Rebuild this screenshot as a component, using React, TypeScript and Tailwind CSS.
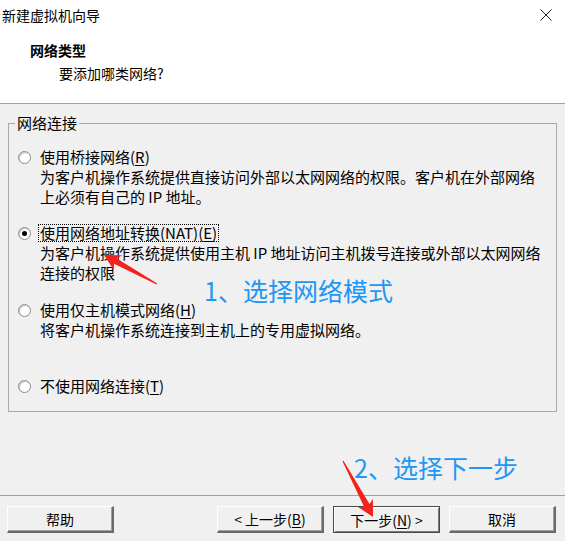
import React from "react";

const font = "font-['Noto_Sans_CJK_SC','Microsoft_YaHei',sans-serif]";

function Radio({ checked }: { checked?: boolean }) {
  return (
    <span className="w-[13px] h-[13px] rounded-full border border-[#8c8c8c] bg-white flex items-center justify-center shadow-[inset_1px_1px_1px_#c4c4c4]">
      {checked && <span className="w-[5px] h-[5px] rounded-full bg-black" />}
    </span>
  );
}

function Hot({ k }: { k: string }) {
  return (
    <>
      (<span className="underline underline-offset-2">{k}</span>)
    </>
  );
}

function Option({
  label,
  hot,
  lines,
  checked,
  focused,
  className,
}: {
  label: string;
  hot: string;
  lines: string[];
  checked?: boolean;
  focused?: boolean;
  className?: string;
}) {
  return (
    <div className={"flex " + (className || "")}>
      <div className="w-[13px] h-[20px] ml-[3px] flex items-center shrink-0">
        <Radio checked={checked} />
      </div>
      <div className="ml-[9px] text-[15px] leading-[20px]">
        <div className="h-[20px]">
          {focused ? (
            <span className="inline-block -ml-[2px] mt-px px-px h-[18px] leading-[16px] border border-dotted border-black align-top">
              {label}
              <Hot k={hot} />
            </span>
          ) : (
            <span>
              {label}
              <Hot k={hot} />
            </span>
          )}
        </div>
        {lines.map((l) => (
          <div key={l} className="whitespace-nowrap">
            {l}
          </div>
        ))}
      </div>
    </div>
  );
}

function WinButton({
  children,
  isDefault,
  className,
}: {
  children: React.ReactNode;
  isDefault?: boolean;
  className?: string;
}) {
  return (
    <button
      className={
        "w-[107px] h-[27px] text-[14px] leading-none flex items-center justify-center bg-[#f0f0f0] " +
        (isDefault
          ? "border border-[#4a4a4a] shadow-[inset_1px_1px_0_#ffffff,inset_-1px_-1px_0_#7a7a7a] "
          : "border-t border-l border-b-2 border-r-2 border-t-white border-l-white border-b-[#6a6a6a] border-r-[#6a6a6a] shadow-[inset_-1px_-1px_0_#a0a0a0] ") +
        (className || "")
      }
    >
      {children}
    </button>
  );
}

function Arrow({ x1, y1, x2, y2 }: { x1: number; y1: number; x2: number; y2: number }) {
  const dx = x2 - x1;
  const dy = y2 - y1;
  const L = Math.sqrt(dx * dx + dy * dy);
  const a = (Math.atan2(dy, dx) * 180) / Math.PI;
  const pts = `0,-0.6 ${L - 13},-3 ${L - 16},-8.5 ${L},0 ${L - 16},8.5 ${L - 13},3 0,0.6`;
  return (
    <polygon points={pts} fill="#f5221b" transform={`translate(${x1} ${y1}) rotate(${a})`} />
  );
}

export default function App() {
  return (
    <div className={"relative w-[565px] h-[541px] flex flex-col bg-[#f0f0f0] text-black overflow-hidden " + font}>
      {/* 헤더 */}
      <div className="h-[103px] bg-white flex flex-col">
        <div className="h-[30px] flex items-center justify-between pl-[2px] pr-[13px]">
          <span className="text-[14px]">新建虚拟机向导</span>
          <svg width="12" height="12" viewBox="0 0 12 12">
            <path d="M0.5 0.5 L11.5 11.5 M11.5 0.5 L0.5 11.5" stroke="#222" strokeWidth="1" />
          </svg>
        </div>
        <div className="pl-[30px] pt-[10px] text-[14px] leading-[20px] font-bold">网络类型</div>
        <div className="pl-[59px] pt-[3px] text-[14px] leading-[20px]">要添加哪类网络?</div>
      </div>
      <div className="h-px bg-[#a0a0a0]" />

      {/* 본문 */}
      <div className="flex-1 px-[8px] pt-[9px]">
        <fieldset className="border border-[#a9a9a9] h-[299px] pl-[6px] pt-[14px]">
          <legend className="px-[2px] text-[15px] leading-[20px]">网络连接</legend>
          <Option
            label="使用桥接网络"
            hot="R"
            lines={["为客户机操作系统提供直接访问外部以太网网络的权限。客户机在外部网络", "上必须有自己的 IP 地址。"]}
          />
          <Option
            className="mt-[16px]"
            label="使用网络地址转换(NAT)"
            hot="E"
            checked
            focused
            lines={["为客户机操作系统提供使用主机 IP 地址访问主机拨号连接或外部以太网网络", "连接的权限"]}
          />
          <Option
            className="mt-[17px]"
            label="使用仅主机模式网络"
            hot="H"
            lines={["将客户机操作系统连接到主机上的专用虚拟网络。"]}
          />
          <Option className="mt-[36px]" label="不使用网络连接" hot="T" lines={[]} />
        </fieldset>
      </div>

      <div className="h-px bg-[#a0a0a0]" />
      <div className="h-[45px] flex pl-[7px] pr-[9px] pt-[10px]">
        <WinButton>帮助</WinButton>
        <div className="ml-auto flex gap-[9px]">
          <WinButton>
            &lt; 上一步
            <Hot k="B" />
          </WinButton>
          <WinButton isDefault>
            下一步
            <Hot k="N" />
            &nbsp;&gt;
          </WinButton>
          <WinButton>取消</WinButton>
        </div>
      </div>

      {/* 주석 */}
      <div className="absolute left-[204px] top-[273px] text-[25px] leading-[34px] text-[#2196f3] whitespace-nowrap">
        1、选择网络模式
      </div>
      <div className="absolute left-[354px] top-[450px] text-[25px] leading-[34px] text-[#2196f3] whitespace-nowrap">
        2、选择下一步
      </div>
      <svg className="absolute left-0 top-0 pointer-events-none" width="565" height="541">
        <Arrow x1={157} y1={284} x2={104} y2={255} />
        <Arrow x1={343} y1={461} x2={373} y2={517} />
      </svg>
    </div>
  );
}
